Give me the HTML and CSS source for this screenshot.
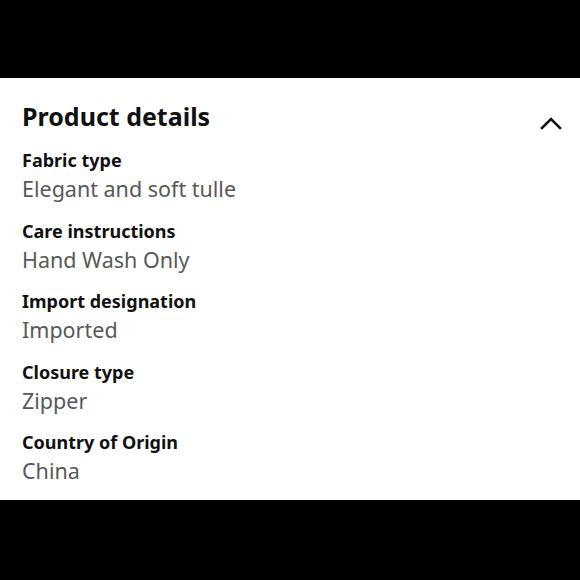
FILE: index.html
```html
<!DOCTYPE html>
<html>
<head>
<meta charset="utf-8">
<link rel="stylesheet" href="styles.css">
</head>
<body>
<div class="band top"></div>
<section class="panel">
  <div class="header">
    <h1 class="title">Product details</h1>
    <svg class="chevron" width="22" height="14" viewBox="0 0 22 14"><path d="M2 12 L11 3 L20 12" fill="none" stroke="#111" stroke-width="2.6" stroke-linecap="square"/></svg>
  </div>
  <dl class="list">
    <div class="item"><dt>Fabric type</dt><dd>Elegant and soft tulle</dd></div>
    <div class="item"><dt>Care instructions</dt><dd>Hand Wash Only</dd></div>
    <div class="item"><dt>Import designation</dt><dd>Imported</dd></div>
    <div class="item"><dt>Closure type</dt><dd>Zipper</dd></div>
    <div class="item"><dt>Country of Origin</dt><dd>China</dd></div>
  </dl>
</section>
<div class="band bottom"></div>
</body>
</html>
```

FILE: styles.css
```css
html, body {
  margin: 0;
  padding: 0;
  background: #000;
  font-family: "Noto Sans", "Open Sans", sans-serif;
}
.band.top { height: 78px; }
.band.bottom { height: 80px; }
.panel {
  background: #fff;
  height: 422px;
  box-sizing: border-box;
  padding: 20px 18px 0 22px;
}
.header {
  display: flex;
  justify-content: space-between;
  align-items: flex-start;
}
.title {
  margin: 0;
  font-size: 25px;
  font-weight: 700;
  color: #111;
  line-height: 36px;
}
.chevron { margin-top: 18px; }
.list { margin: 12px 0 0; }
.item { margin-bottom: 13.5px; }
dt {
  font-size: 18px;
  font-weight: 700;
  color: #111;
  line-height: 28px;
}
dd {
  margin: 0;
  font-size: 21.5px;
  color: #565959;
  line-height: 29px;
}
```
